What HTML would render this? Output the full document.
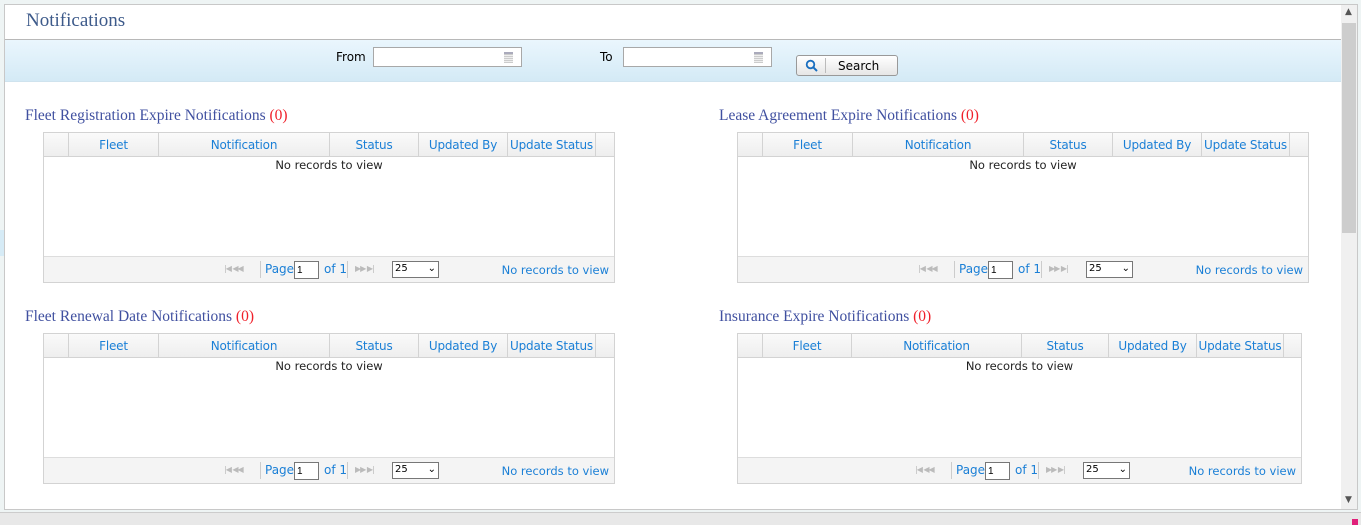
<!DOCTYPE html>
<html><head><meta charset="utf-8"><style>
*{box-sizing:border-box;margin:0;padding:0}
body{width:1361px;height:525px;overflow:hidden;background:#eef4f4;font-family:"DejaVu Sans","Liberation Sans",sans-serif;position:relative}
#frame{position:absolute;left:4px;top:4px;width:1354px;height:506px;border:1px solid #c8c8c8;background:#fff}
#hdr{position:absolute;left:0;top:0;width:1336px;height:35px;background:#fff;border-bottom:1px solid #b8b8b8}
#hdr h1{position:absolute;left:21px;top:5px;font:normal 19px "Liberation Serif",serif;color:#3d5a8a}
#band{position:absolute;left:0;top:35px;width:1336px;height:42px;background:linear-gradient(#eaf6fd,#d4eaf6);border-bottom:1px solid #cfe3ee;font-size:12px}
.lbl{position:absolute;top:10px;color:#000}
.inp{position:absolute;top:7px;width:149px;height:20px;border:1px solid #a8a8a8;background:#fff}
.inp:after{content:"";position:absolute;right:8px;top:4px;width:9px;height:9px;background:repeating-linear-gradient(#ccc 0 1px,#eee 1px 2px);border-top:2px solid #aab}
#btn{position:absolute;left:791px;top:15px;width:102px;height:21px;border:1px solid #999;border-radius:3px;background:linear-gradient(#fff,#e6e6e6);font-size:12px}
#btn span{position:absolute;left:41px;top:3px}
#btn i{position:absolute;left:28px;top:2px;bottom:2px;border-left:1px solid #bbb}
#scroll{position:absolute;left:1336px;top:0;width:16px;height:504px;background:#f0f0f0}
#thumb{position:absolute;left:1337px;top:18px;width:14px;height:210px;background:#cdcdcd}
.arr{position:absolute;left:1340px;font-size:9px;color:#555}
h2{position:absolute;font:normal 15.5px "Liberation Serif",serif;color:#4050a0}
h2 b{font-weight:normal;color:#f0202a}
.grid{position:absolute;border:1px solid #d3d3d3;background:#fff;height:151px}
.gh{position:absolute;left:0;right:0;top:0;height:24px;background:linear-gradient(#fafafa,#eee);border-bottom:1px solid #d3d3d3}
.gh div{position:absolute;top:0;height:23px;border-right:1px solid #d3d3d3;color:#1a7fd6;font-size:12px;text-align:center;line-height:25px;letter-spacing:-0.2px}
.nr{position:absolute;top:25px;font-size:11.5px;color:#222;width:100%;text-align:center}
.pg{position:absolute;left:0;right:0;bottom:0;height:26px;background:#f4f4f4;border-top:1px solid #ddd;font-size:12px;color:#1a7fd6}
.pg .p{position:absolute;top:5px}
.pg input{position:absolute;top:4px;width:25px;height:18px;border:1px solid #777;font-size:10px;padding-left:2px}
.pg .sel{position:absolute;top:4px;width:47px;height:17px;border:1px solid #777;background:#fff;font-size:10px;color:#000;padding:1px 2px}
.pg .ic{position:absolute;top:7px;color:#bbb;font-size:8px;letter-spacing:-1px}
.pg .nv{position:absolute;right:5px;top:6px;font-size:11.5px}
</style></head><body>
<div style="position:absolute;left:0;top:230px;width:4px;height:26px;background:#d6ebf6"></div>
<div style="position:absolute;left:0;top:512px;width:1361px;height:13px;background:#e8e8e8;border-top:1px solid #ccc"></div>
<div style="position:absolute;left:1352px;top:519px;width:6px;height:6px;background:#e0207a"></div>
<div id="frame">
<div id="hdr"><h1>Notifications</h1></div>
<div id="band">
<span class="lbl" style="left:331px">From</span><div class="inp" style="left:368px"></div>
<span class="lbl" style="left:595px">To</span><div class="inp" style="left:618px"></div>
<div id="btn"><svg style="position:absolute;left:8px;top:3px" width="14" height="14"><circle cx="5.5" cy="5.5" r="3.8" stroke="#1a6fc0" stroke-width="1.8" fill="none"/><path d="M8.3 8.3L12 12" stroke="#1a6fc0" stroke-width="2"/></svg><i></i><span>Search</span></div>
</div>
<div id="scroll"></div><div id="thumb"></div>
<div class="arr" style="top:2px">&#9650;</div><div class="arr" style="top:490px">&#9660;</div>
</div>

<h2 style="left:25px;top:107px">Fleet Registration Expire Notifications <b>(0)</b></h2>
<h2 style="left:719px;top:107px">Lease Agreement Expire Notifications <b>(0)</b></h2>
<h2 style="left:25px;top:308px">Fleet Renewal Date Notifications <b>(0)</b></h2>
<h2 style="left:719px;top:308px">Insurance Expire Notifications <b>(0)</b></h2>

<div class="grid" style="left:43px;top:132px;width:572px">
<div class="gh"><div style="left:0;width:25px"></div><div style="left:25px;width:90px">Fleet</div><div style="left:115px;width:171px">Notification</div><div style="left:286px;width:89px">Status</div><div style="left:375px;width:89px">Updated By</div><div style="left:464px;width:88px">Update Status</div></div>
<div class="nr">No records to view</div>
<div class="pg"><span class="ic" style="left:180px">|◀ ◀◀</span><span style="position:absolute;left:216px;top:4px;height:17px;border-left:1px solid #ccc"></span><span class="p" style="left:221px">Page</span><input value="1" style="left:250px"><span class="p" style="left:280px">of 1</span><span style="position:absolute;left:303px;top:4px;height:17px;border-left:1px solid #ccc"></span><span class="ic" style="left:311px">▶▶ ▶|</span><div class="sel" style="left:348px">25 <span style="float:right">&#8964;</span></div><span class="nv">No records to view</span></div>
</div>
<div class="grid" style="left:737px;top:132px;width:572px">
<div class="gh"><div style="left:0;width:25px"></div><div style="left:25px;width:90px">Fleet</div><div style="left:115px;width:171px">Notification</div><div style="left:286px;width:89px">Status</div><div style="left:375px;width:89px">Updated By</div><div style="left:464px;width:88px">Update Status</div></div>
<div class="nr">No records to view</div>
<div class="pg"><span class="ic" style="left:180px">|◀ ◀◀</span><span style="position:absolute;left:216px;top:4px;height:17px;border-left:1px solid #ccc"></span><span class="p" style="left:221px">Page</span><input value="1" style="left:250px"><span class="p" style="left:280px">of 1</span><span style="position:absolute;left:303px;top:4px;height:17px;border-left:1px solid #ccc"></span><span class="ic" style="left:311px">▶▶ ▶|</span><div class="sel" style="left:348px">25 <span style="float:right">&#8964;</span></div><span class="nv">No records to view</span></div>
</div>
<div class="grid" style="left:43px;top:333px;width:572px">
<div class="gh"><div style="left:0;width:25px"></div><div style="left:25px;width:90px">Fleet</div><div style="left:115px;width:171px">Notification</div><div style="left:286px;width:89px">Status</div><div style="left:375px;width:89px">Updated By</div><div style="left:464px;width:88px">Update Status</div></div>
<div class="nr">No records to view</div>
<div class="pg"><span class="ic" style="left:180px">|◀ ◀◀</span><span style="position:absolute;left:216px;top:4px;height:17px;border-left:1px solid #ccc"></span><span class="p" style="left:221px">Page</span><input value="1" style="left:250px"><span class="p" style="left:280px">of 1</span><span style="position:absolute;left:303px;top:4px;height:17px;border-left:1px solid #ccc"></span><span class="ic" style="left:311px">▶▶ ▶|</span><div class="sel" style="left:348px">25 <span style="float:right">&#8964;</span></div><span class="nv">No records to view</span></div>
</div>
<div class="grid" style="left:737px;top:333px;width:565px">
<div class="gh"><div style="left:0;width:25px"></div><div style="left:25px;width:89px">Fleet</div><div style="left:114px;width:170px">Notification</div><div style="left:284px;width:87px">Status</div><div style="left:371px;width:88px">Updated By</div><div style="left:459px;width:87px">Update Status</div></div>
<div class="nr">No records to view</div>
<div class="pg"><span class="ic" style="left:177px">|◀ ◀◀</span><span style="position:absolute;left:213px;top:4px;height:17px;border-left:1px solid #ccc"></span><span class="p" style="left:218px">Page</span><input value="1" style="left:247px"><span class="p" style="left:277px">of 1</span><span style="position:absolute;left:300px;top:4px;height:17px;border-left:1px solid #ccc"></span><span class="ic" style="left:308px">▶▶ ▶|</span><div class="sel" style="left:345px">25 <span style="float:right">&#8964;</span></div><span class="nv">No records to view</span></div>
</div>
</body></html>
